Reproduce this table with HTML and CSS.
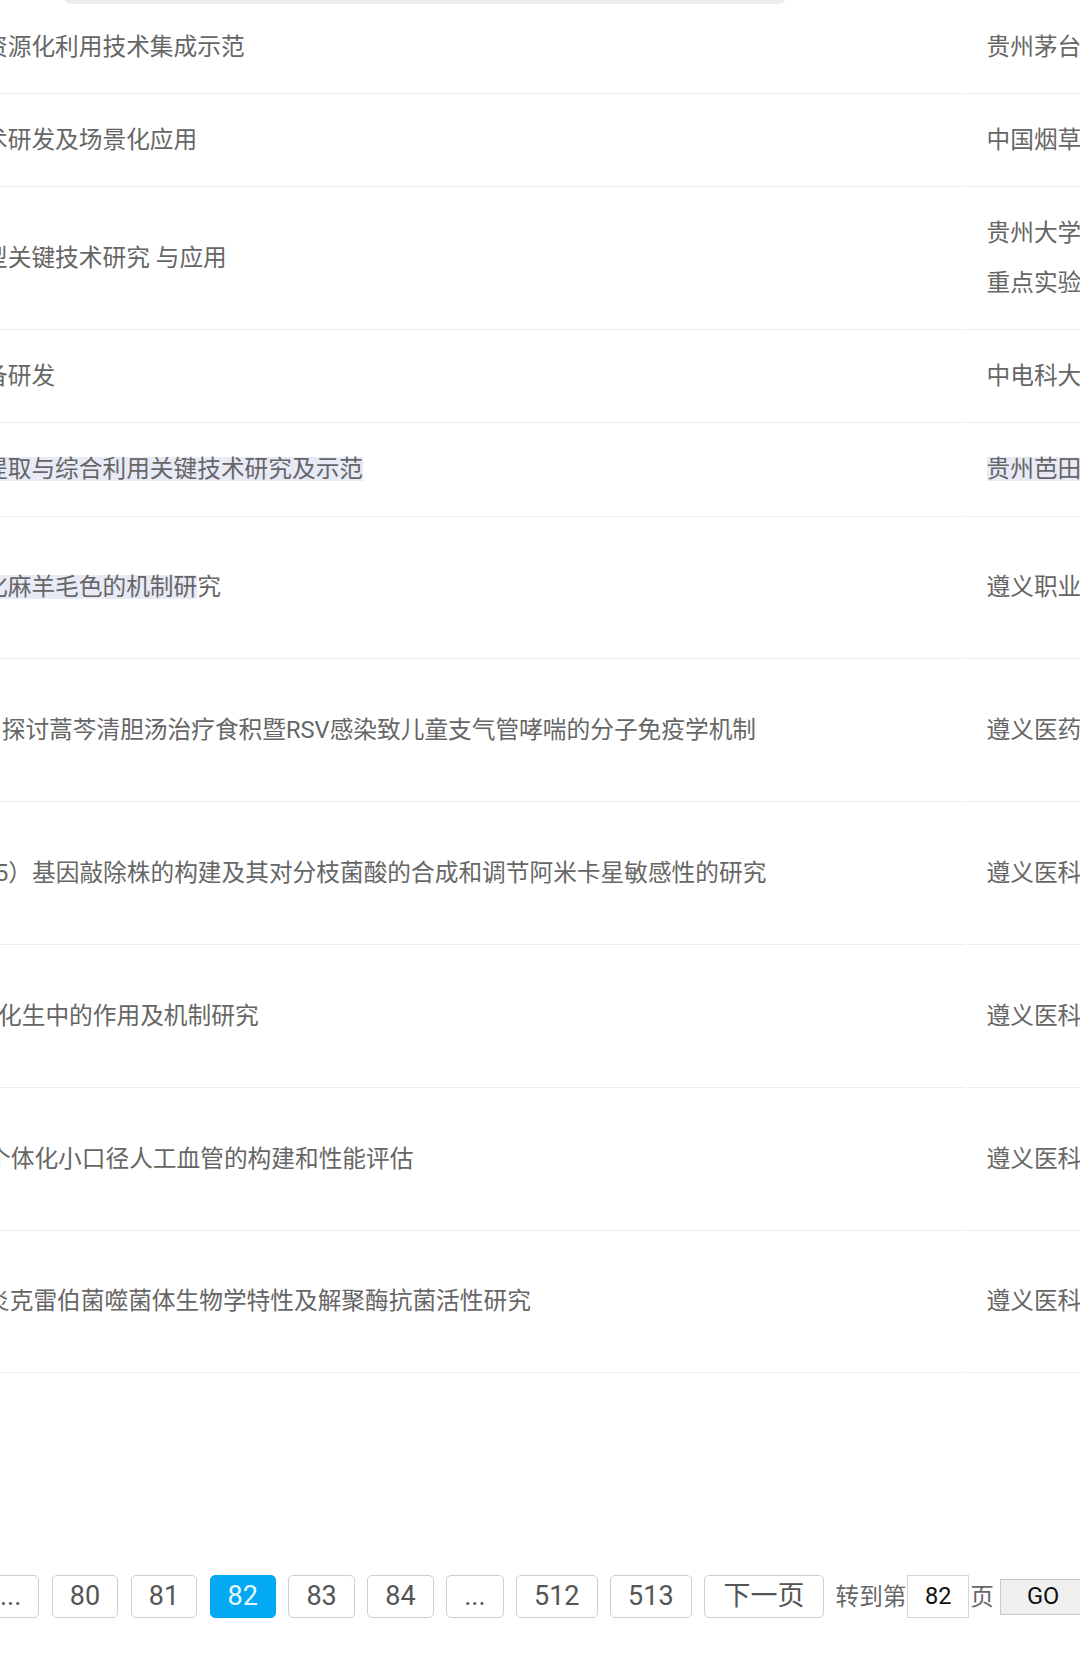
FILE: index.html
```html
<!DOCTYPE html>
<html lang="zh-CN">
<head>
<meta charset="utf-8">
<title>项目列表</title>
<link rel="stylesheet" href="styles.css">
</head>
<body>
<div class="top-edge"></div>
<div class="table">
  <div class="row short">
    <div class="cell title"><span class="t">资源化利用技术集成示范</span></div>
    <div class="cell org">贵州茅台</div>
  </div>
  <div class="row short">
    <div class="cell title"><span class="t">术研发及场景化应用</span></div>
    <div class="cell org">中国烟草</div>
  </div>
  <div class="row tall">
    <div class="cell title"><span class="t">型关键技术研究 与应用</span></div>
    <div class="cell org"><span class="lines">贵州大学<br>重点实验</span></div>
  </div>
  <div class="row short">
    <div class="cell title"><span class="t">备研发</span></div>
    <div class="cell org">中电科大</div>
  </div>
  <div class="row short">
    <div class="cell title"><span class="t"><span class="sel">提取与综合利用关键技术研究及示范</span></span></div>
    <div class="cell org"><span class="sel">贵州芭田</span></div>
  </div>
  <div class="row tall">
    <div class="cell title"><span class="t"><span class="sel">化麻羊毛色的机制研</span>究</span></div>
    <div class="cell org">遵义职业</div>
  </div>
  <div class="row tall">
    <div class="cell title"><span class="t t-g">用探讨蒿芩清胆汤治疗食积暨RSV感染致儿童支气管哮喘的分子免疫学机制</span></div>
    <div class="cell org">遵义医药</div>
  </div>
  <div class="row tall">
    <div class="cell title"><span class="t t-h">5）基因敲除株的构建及其对分枝菌酸的合成和调节阿米卡星敏感性的研究</span></div>
    <div class="cell org">遵义医科</div>
  </div>
  <div class="row tall">
    <div class="cell title"><span class="t t-i">化生中的作用及机制研究</span></div>
    <div class="cell org">遵义医科</div>
  </div>
  <div class="row tall">
    <div class="cell title"><span class="t t-j">个体化小口径人工血管的构建和性能评估</span></div>
    <div class="cell org">遵义医科</div>
  </div>
  <div class="row tall">
    <div class="cell title"><span class="t t-k">炎克雷伯菌噬菌体生物学特性及解聚酶抗菌活性研究</span></div>
    <div class="cell org">遵义医科</div>
  </div>
</div>

<div class="pager">
  <span class="pbtn first">...</span>
  <span class="pbtn">80</span>
  <span class="pbtn">81</span>
  <span class="pbtn active">82</span>
  <span class="pbtn">83</span>
  <span class="pbtn">84</span>
  <span class="pbtn">...</span>
  <span class="pbtn">512</span>
  <span class="pbtn">513</span>
  <span class="pbtn next">下一页</span>
  <span class="jump">
    <span class="jump-label">转到第</span>
    <span class="jump-input">82</span>
    <span class="jump-label">页</span>
    <span class="go">GO</span>
  </span>
</div>
</body>
</html>
```

FILE: styles.css
```css
html, body {
  margin: 0;
  padding: 0;
}
body {
  width: 1080px;
  height: 1678px;
  overflow: hidden;
  background: #ffffff;
  font-family: Roboto, "Noto Sans CJK SC", sans-serif;
  color: #666666;
  position: relative;
}

.top-edge {
  position: absolute;
  left: 64px;
  top: -10px;
  width: 722px;
  height: 14px;
  border-radius: 10px;
  background: #ededed;
}

.table {
  display: flex;
  flex-direction: column;
  padding-top: 1px;
}
.row {
  display: grid;
  grid-template-columns: 964px 200px;
  column-gap: 3px;
}
.row.short { height: 93.2px; }
.row.tall { height: 142.8px; }

.cell {
  box-sizing: border-box;
  border-bottom: 1.8px solid #ececec;
  display: flex;
  align-items: center;
  white-space: nowrap;
  overflow: hidden;
  font-size: 23.7px;
  line-height: 50px;
}
.title .t {
  margin-left: -16px;
}
.title .t-g { margin-left: -22px; }
.title .t-h { margin-left: -5px; }
.title .t-i { margin-left: -2px; }
.title .t-j { margin-left: -13px; }
.title .t-k { margin-left: -14px; }

.org {
  padding-left: 19.5px;
}
.lines {
  display: block;
}

.sel {
  display: inline-block;
  line-height: 24px;
  background: #e8eaf6;
}

.pager {
  display: flex;
  align-items: center;
  gap: 12.5px;
  margin-top: 201.6px;
  white-space: nowrap;
}
.pbtn {
  box-sizing: border-box;
  height: 43.3px;
  padding: 0 17px;
  border: 1.67px solid #cfcfcf;
  border-radius: 5px;
  font-size: 27px;
  line-height: 40px;
  color: #555555;
  flex: none;
}
.pbtn.first {
  margin-left: -18px;
}
.pbtn.next {
  padding: 0 18.5px;
}
.pbtn.active {
  background: #03a9f4;
  border-color: #03a9f4;
  color: #e6f8ff;
}
.jump {
  display: flex;
  align-items: center;
  flex: none;
  margin-left: -1px;
  font-size: 23.6px;
}
.jump-label {
  color: #666666;
  line-height: 30px;
}
.jump-input {
  box-sizing: border-box;
  width: 62px;
  height: 43.3px;
  margin: 0 1px;
  border: 1.67px solid #d6d6d6;
  text-align: center;
  line-height: 40px;
  color: #111111;
}
.go {
  box-sizing: border-box;
  height: 36px;
  margin-left: 6px;
  padding: 0 26px;
  border: 1.67px solid #c8c8c8;
  background: #efefef;
  color: #111111;
  line-height: 32px;
}
```
